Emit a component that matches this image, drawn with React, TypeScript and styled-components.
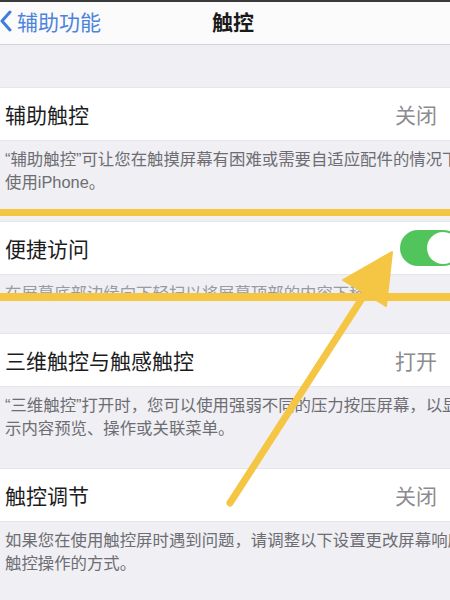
import styled, { createGlobalStyle } from 'styled-components';

const GlobalStyle = createGlobalStyle`
  html, body {
    margin: 0;
    padding: 0;
    background: #efeff4;
    overflow: hidden;
  }
  body {
    font-family: "Liberation Sans", "Noto Sans CJK SC", sans-serif;
  }
`;

interface ISetting {
  title: string;
  value?: string;
  toggle?: boolean;
  footer: string[];
  gap: number;
}

const settings: ISetting[] = [
  {
    title: '辅助触控',
    value: '关闭',
    footer: ['“辅助触控”可让您在触摸屏幕有困难或需要自适应配件的情况下', '使用iPhone。'],
    gap: 27,
  },
  {
    title: '便捷访问',
    toggle: true,
    footer: ['在屏幕底部边缘向下轻扫以将屏幕顶部的内容下移'],
    gap: 28,
  },
  {
    title: '三维触控与触感触控',
    value: '打开',
    footer: ['“三维触控”打开时，您可以使用强弱不同的压力按压屏幕，以显', '示内容预览、操作或关联菜单。'],
    gap: 28,
  },
  {
    title: '触控调节',
    value: '关闭',
    footer: ['如果您在使用触控屏时遇到问题，请调整以下设置更改屏幕响应', '触控操作的方式。'],
    gap: 0,
  },
];

export default function App() {
  return (
    <Screen>
      <GlobalStyle />
      <StatusEdge />
      <NavBar>
        <BackButton>
          <svg width='12' height='22' viewBox='0 0 12 22'>
            <path d='M10 2 L2 11 L10 20' fill='none' stroke='#3d7de0' strokeWidth='3' strokeLinecap='round' strokeLinejoin='round' />
          </svg>
          <span>辅助功能</span>
        </BackButton>
        <NavTitle>触控</NavTitle>
      </NavBar>
      <TopSpacer />
      {settings.map((s) => (
        <Section key={s.title} gap={s.gap}>
          <Row>
            <RowTitle>{s.title}</RowTitle>
            {s.value && <RowValue>{s.value}</RowValue>}
            {s.toggle && (
              <Toggle>
                <Knob />
              </Toggle>
            )}
          </Row>
          <Footer faded={s.toggle}>
            {s.footer.map((line, i) => (
              <FooterLine key={i}>{line}</FooterLine>
            ))}
          </Footer>
        </Section>
      ))}
      <Annotations width='450' height='600' viewBox='0 0 450 600'>
        <line x1='0' y1='212.5' x2='450' y2='212.5' stroke='#f5c544' strokeWidth='7' />
        <line x1='0' y1='297' x2='450' y2='297' stroke='#f5c544' strokeWidth='8' />
        <line x1='230' y1='503' x2='370' y2='286' stroke='#f5c544' strokeWidth='7' strokeLinecap='round' />
        <polygon points='392,252 343,280 386,306' fill='#f5c544' stroke='#f5c544' strokeWidth='2' strokeLinejoin='round' />
      </Annotations>
    </Screen>
  );
}

const Screen = styled('div')`
  position: relative;
  width: 450px;
  height: 600px;
  overflow: hidden;
  background: #efeff4;
`;

const StatusEdge = styled('div')`
  height: 2px;
  background: #3a3a3a;
`;

const NavBar = styled('div')`
  position: relative;
  height: 43px;
  box-sizing: border-box;
  display: flex;
  align-items: center;
  justify-content: center;
  background: #fbfbfb;
  border-bottom: 1px solid #d4d4d8;
`;

const BackButton = styled('div')`
  position: absolute;
  left: 0;
  top: 0;
  bottom: 0;
  display: flex;
  align-items: center;
  gap: 5px;
  color: #4c83dc;
  font-size: 21px;
  padding-bottom: 5px;
`;

const NavTitle = styled('div')`
  font-size: 21px;
  font-weight: 600;
  color: #1a1a1a;
  padding-bottom: 5px;
  margin-left: 16px;
`;

const TopSpacer = styled('div')`
  height: 42px;
`;

const Section = styled('div')<{ gap: number }>`
  margin-bottom: ${(p) => p.gap}px;
`;

const Row = styled('div')`
  height: 54px;
  box-sizing: border-box;
  display: flex;
  align-items: center;
  justify-content: space-between;
  padding: 0 13px 0 5px;
  background: #ffffff;
  border-top: 1px solid #e6e6ea;
  border-bottom: 1px solid #e6e6ea;
  overflow: hidden;
`;

const RowTitle = styled('div')`
  font-size: 21px;
  color: #1c1c1e;
`;

const RowValue = styled('div')`
  font-size: 21px;
  color: #8c8c90;
`;

const Toggle = styled('div')`
  flex-shrink: 0;
  width: 61px;
  height: 36px;
  margin-right: -24px;
  border-radius: 18px;
  background: #52c45c;
  display: flex;
  align-items: center;
  justify-content: flex-end;
  padding: 0 2px;
  box-sizing: border-box;
`;

const Knob = styled('div')`
  width: 32px;
  height: 32px;
  border-radius: 50%;
  background: #ffffff;
`;

const Footer = styled('div')<{ faded?: boolean }>`
  padding: 7px 0 0 5px;
  font-size: 16.4px;
  line-height: 23px;
  color: ${(p) => (p.faded ? '#9a9aa0' : '#6d6d72')};
  white-space: nowrap;
  overflow: hidden;
`;

const FooterLine = styled('div')``;

const Annotations = styled('svg')`
  position: absolute;
  left: 0;
  top: 0;
  pointer-events: none;
`;
